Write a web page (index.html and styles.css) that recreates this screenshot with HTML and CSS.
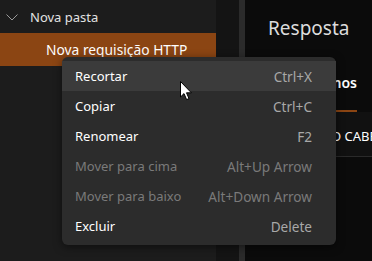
FILE: index.html
```html
<!doctype html>
<html lang="pt">
<head>
    <meta charset="UTF-8">
    <title>Requisição</title>
    <link rel="stylesheet" href="styles.css">
</head>
<body>
<div class="app">
    <aside class="sidebar">
        <div class="tree-row folder">
            <svg class="chevron" width="12" height="7" viewBox="0 0 12 7"><path d="M0.5 0.5 L6 6 L11.5 0.5" fill="none" stroke="#9a9a9a" stroke-width="1"/></svg>
            <span>Nova pasta</span>
        </div>
        <div class="tree-row request active">Nova requisição HTTP</div>
    </aside>
    <div class="gutter"></div>
    <div class="splitter"></div>
    <main class="response">
        <h2 class="title">Resposta</h2>
        <div class="tabs">
            <span class="tab active">Termos</span>
        </div>
        <div class="table-head">NOME DO CABEÇALHO</div>
    </main>
</div>

<!-- menu de contexto -->
<ul class="context-menu">
    <li class="hover"><span>Recortar</span><span class="key">Ctrl+X</span></li>
    <li><span>Copiar</span><span class="key">Ctrl+C</span></li>
    <li><span>Renomear</span><span class="key">F2</span></li>
    <li class="disabled"><span>Mover para cima</span><span class="key">Alt+Up Arrow</span></li>
    <li class="disabled"><span>Mover para baixo</span><span class="key">Alt+Down Arrow</span></li>
    <li><span>Excluir</span><span class="key">Delete</span></li>
</ul>

<svg class="cursor" width="13" height="20" viewBox="0 0 13 20">
    <path d="M0.5 0.5 L0.5 16 L4 12.6 L6.6 18.6 L9 17.6 L6.5 11.8 L11.4 11.8 Z" fill="#fff" stroke="#000" stroke-width="1" stroke-linejoin="round"/>
</svg>
</body>
</html>
```

FILE: styles.css
```css
*{margin:0;padding:0;box-sizing:border-box;}
html,body{
    width:100%;
    height:100%;
    background:#0b0b0b;
    font-family:"Noto Sans","Open Sans",sans-serif;
    overflow:hidden;
}
.app{
    display:flex;
    height:261px;
}
.sidebar{
    width:216px;
    background:#1c1c1c;
    flex-shrink:0;
}
.tree-row{
    height:33px;
    display:flex;
    align-items:center;
    font-size:13px;
    color:#e2e2e2;
    white-space:nowrap;
}
.tree-row.folder{
    padding-left:6px;
}
.tree-row.folder .chevron{
    margin-right:12px;
    margin-top:1px;
}
.tree-row.request{
    padding-left:46px;
    font-size:13.8px;
}
.tree-row.active{
    background:#8b4513;
    color:#fff;
}
.gutter{
    width:23px;
    background:#141414;
    flex-shrink:0;
}
.splitter{
    width:6px;
    background:#2b2b2b;
    flex-shrink:0;
}
.response{
    flex:1;
    overflow:hidden;
    background:#0b0b0b;
}
.response .title{
    font-weight:normal;
    font-size:19px;
    color:#dcdcdc;
    height:56px;
    line-height:56px;
    padding-left:23px;
}
.tabs{
    height:56px;
    display:flex;
    justify-content:flex-end;
    padding-right:15px;
}
.tab{
    font-size:14px;
    font-weight:600;
    color:#fff;
    line-height:50px;
    padding-top:2px;
    border-bottom:2px solid #8b4513;
    white-space:nowrap;
}
.table-head{
    height:45px;
    line-height:48px;
    background:#111;
    border-bottom:1px solid #2a2a2a;
    font-size:13px;
    color:#fff;
    white-space:nowrap;
    overflow:hidden;
    padding-left:34px;
}
.context-menu{
    position:absolute;
    left:62px;
    top:57px;
    width:274px;
    padding:4px 0;
    list-style:none;
    background:#2c2c2c;
    border-radius:6px;
    box-shadow:0 2px 8px rgba(0,0,0,0.5);
}
.context-menu li{
    height:30px;
    display:flex;
    align-items:center;
    justify-content:space-between;
    padding:0 24px 0 13px;
    font-size:13px;
    color:#fff;
}
.context-menu li .key{
    color:#a8a8a8;
    font-size:13.6px;
}
.context-menu li.hover{
    background:#3b3b3b;
}
.context-menu li.disabled,
.context-menu li.disabled .key{
    color:#7a7a7a;
}
.cursor{
    position:absolute;
    left:180px;
    top:81px;
}
```
